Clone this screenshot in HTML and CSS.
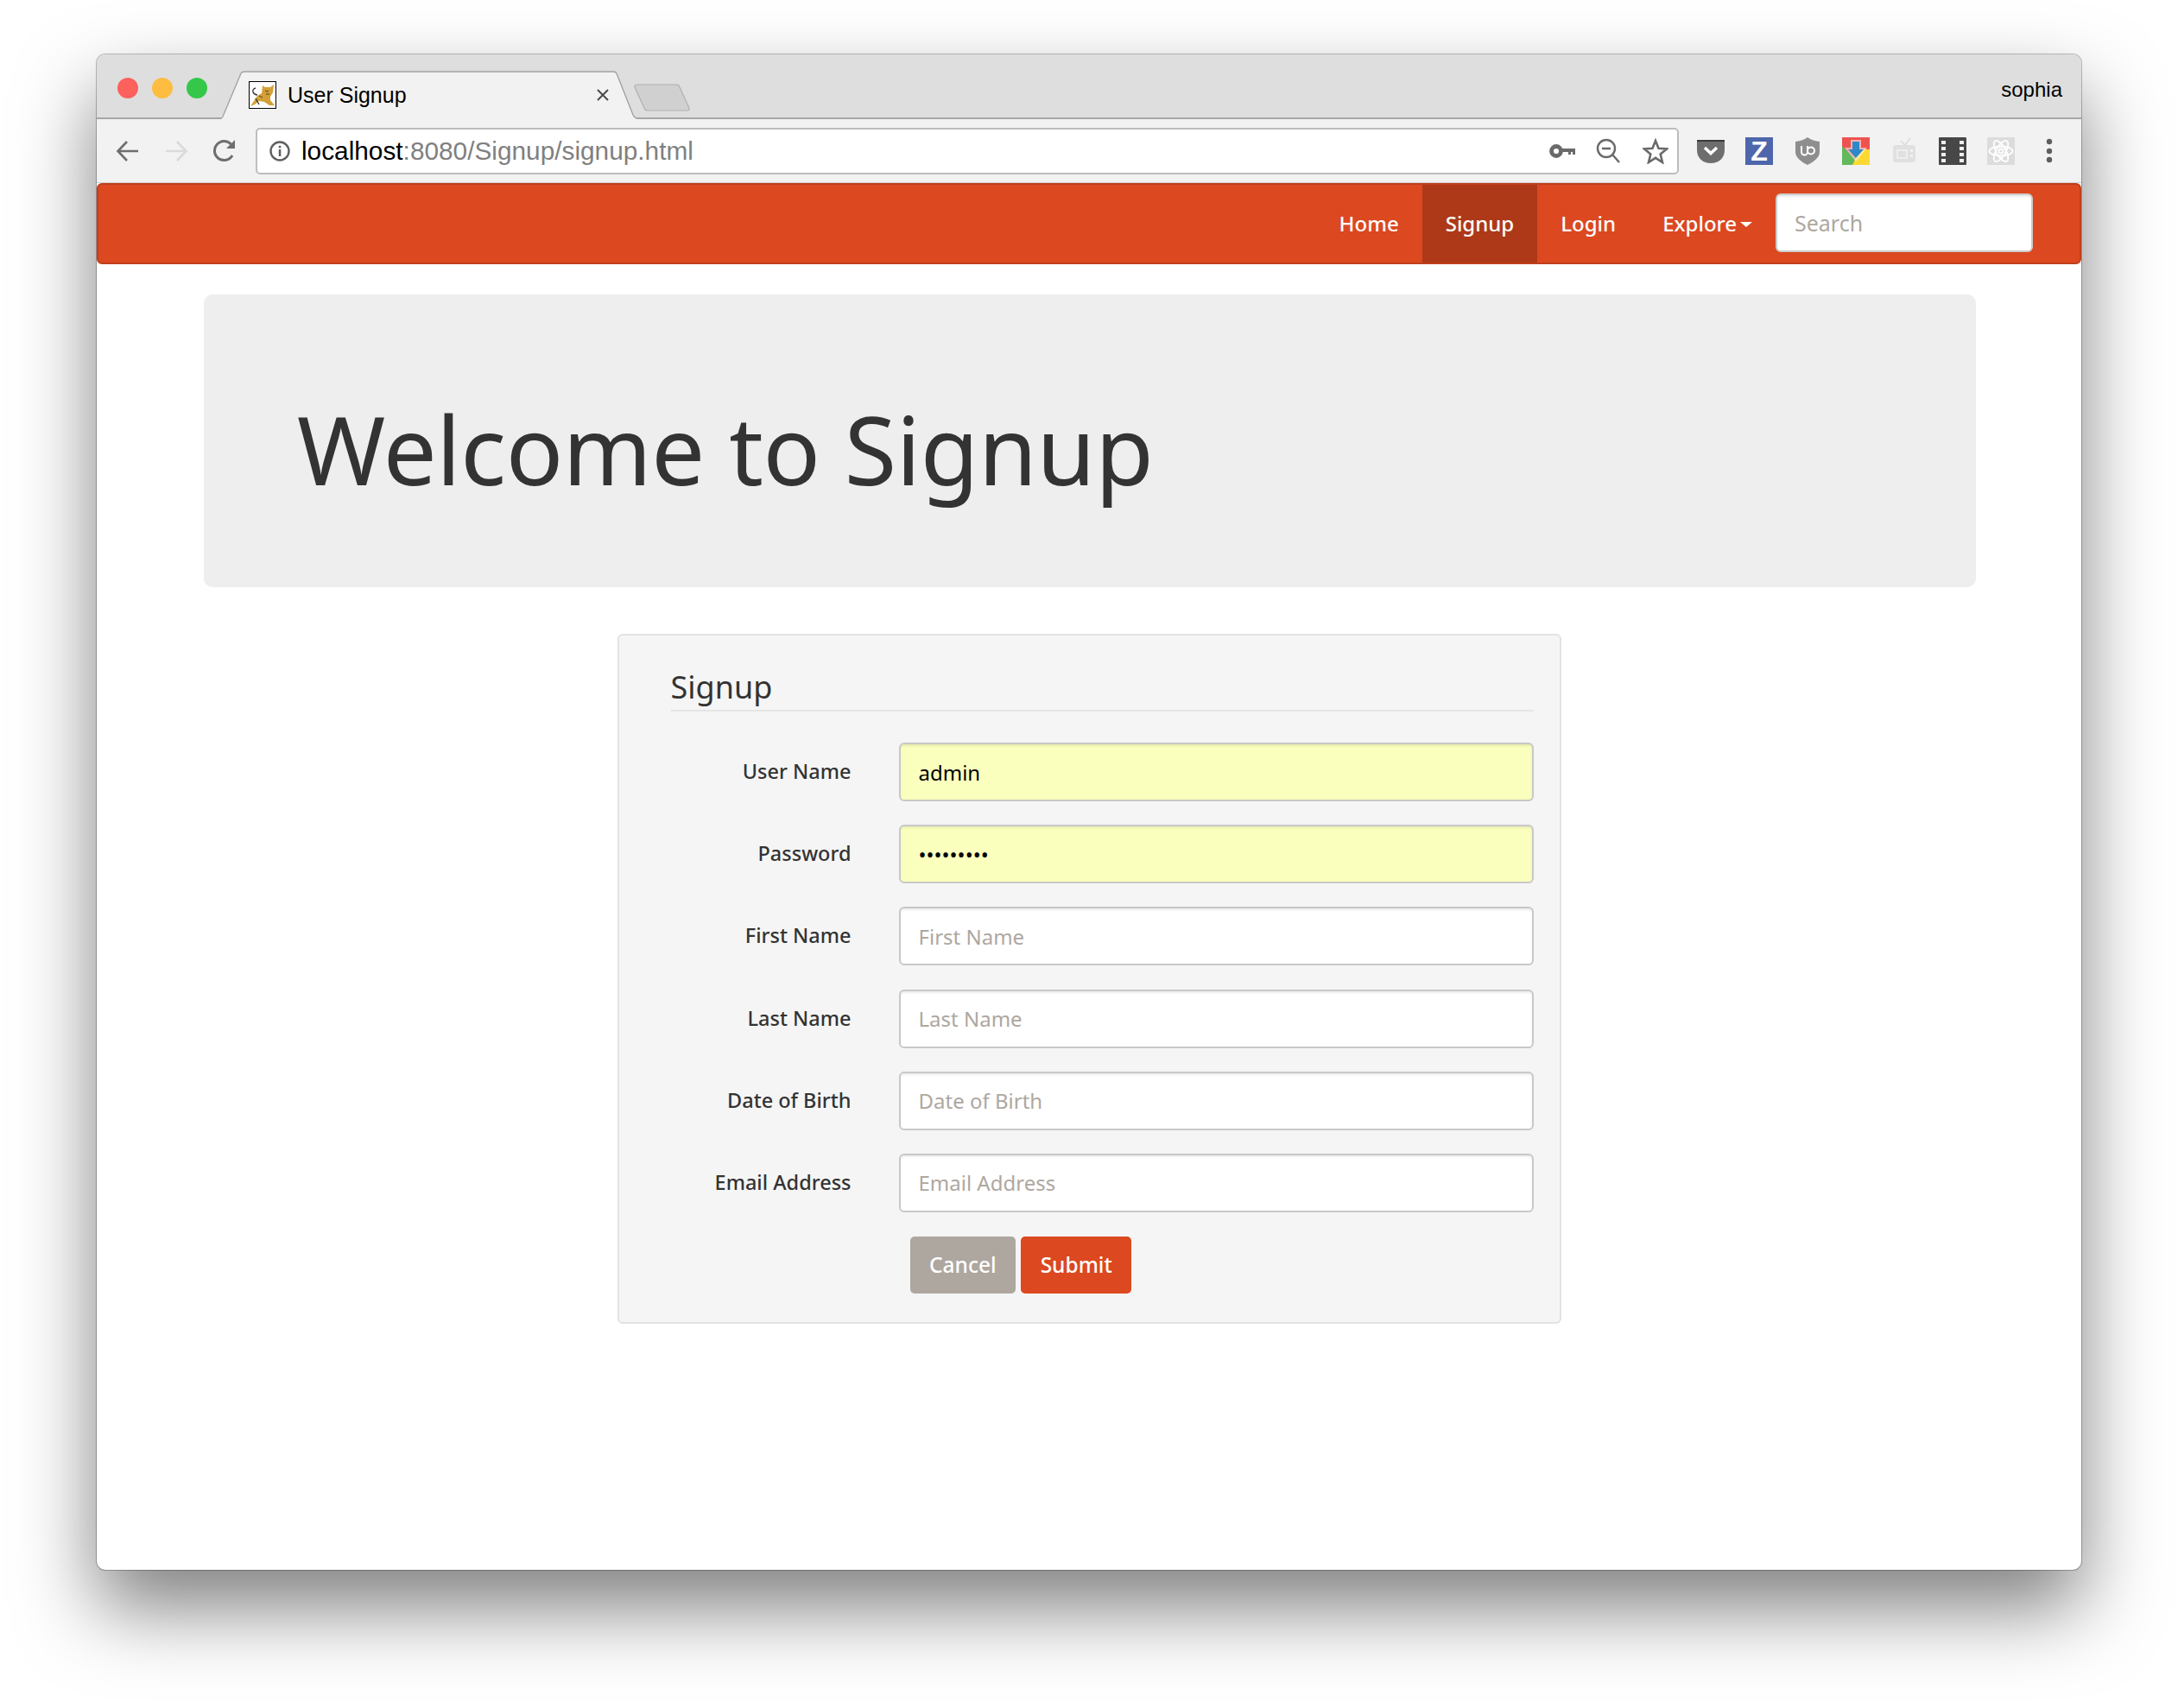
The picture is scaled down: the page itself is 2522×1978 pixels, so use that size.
FILE: index.html
```html
<!DOCTYPE html>
<html lang="en">
<head>
  <meta charset="UTF-8" />
  <title>User Signup</title>
  <link rel="stylesheet" href="styles.css">
</head>
<body>
  <div class="window">
    <div class="titlebar">
      <div class="lights">
        <span class="light red"></span>
        <span class="light yellow"></span>
        <span class="light green"></span>
      </div>
      <div class="tab">
        <svg class="tab-shape" width="483" height="56" viewBox="0 0 483 56">
          <path d="M0 56 L23 3 Q24 1 27 1 L454 1 Q457 1 458 3 L477 52 Q479 56 483 56 Z" fill="#f2f2f2"/>
          <path d="M0 55 Q1 55 2 53 L23 3 Q24 1 27 1 L454 1 Q457 1 458 3 L477 51 Q479 55 483 55" fill="none" stroke="#a3a3a3" stroke-width="1.4"/>
        </svg>
        <svg class="favicon" width="32" height="32" viewBox="0 0 32 32">
          <rect x="0.5" y="0.5" width="31" height="31" fill="#fff" stroke="#000"/>
          <path d="M16 5 L19 7 L25 7 L29 4 L28 13 L25 18 L25 22 L30 28 L24 28 L18 24 L12 23 L7 27 L2 29 L6 23 L10 17 L15 14 Z" fill="#d3a038"/>
          <path d="M10 16 C4 15 3 9 8 8 M8 20 L12 27" fill="none" stroke="#333" stroke-width="1.300"/>
          <path d="M19 11 L21 12 L23 11 M20 15 L24 15 M12 17 L16 19" fill="none" stroke="#5a3c10" stroke-width="1"/>
        </svg>
        <span class="tab-title">User Signup</span>
        <svg class="tab-close" width="16" height="14" viewBox="0 0 16 14">
          <path d="M2 1 L14 13 M14 1 L2 13" stroke="#4a4a4a" stroke-width="2"/>
        </svg>
      </div>
      <svg class="newtab" width="66" height="32" viewBox="0 0 66 32">
        <path d="M1 4 Q1 1 4 1 L50 1 Q52 1 53 4 L64 28 Q65 31 62 31 L16 31 Q13 31 12 28 Z" fill="#d0d0d0" stroke="#b0b0b0" stroke-width="1.2"/>
      </svg>
      <span class="profile">sophia</span>
    </div>

    <div class="toolbar">
      <div class="nav-buttons">
        <svg width="30" height="30" viewBox="0 0 30 30"><path d="M27 15 H4 M14 4 L3.500 15 L14 26" fill="none" stroke="#6e6e6e" stroke-width="2.600"/></svg>
        <svg width="30" height="30" viewBox="0 0 30 30"><path d="M3 15 H26 M16 4 L26.500 15 L16 26" fill="none" stroke="#dadada" stroke-width="2.600"/></svg>
        <svg width="30" height="30" viewBox="0 0 30 30"><path d="M24 20 A11 11 0 1 1 22.500 7" fill="none" stroke="#6e6e6e" stroke-width="3"/><path d="M27 2 V12 H17 Z" fill="#6e6e6e"/></svg>
      </div>
      <div class="omnibox">
        <svg width="24" height="24" viewBox="0 0 24 24"><circle cx="12" cy="12" r="10.500" fill="none" stroke="#5f5f5f" stroke-width="2.400"/><rect x="10.800" y="10" width="2.500" height="8" fill="#5f5f5f"/><rect x="10.800" y="5.800" width="2.500" height="2.600" fill="#5f5f5f"/></svg>
        <span class="url"><span class="url-host">localhost</span>:8080/Signup/signup.html</span>
        <svg class="omni-icon" width="30" height="16" viewBox="0 0 30 16"><circle cx="8" cy="8" r="5.500" fill="none" stroke="#6a6a6a" stroke-width="4.800"/><path d="M13 5 H30 V12 H27 V9 H25 V12 H22 V9 H13 Z" fill="#6a6a6a"/></svg>
        <svg class="omni-icon" width="30" height="30" viewBox="0 0 30 30"><circle cx="12" cy="12" r="10" fill="none" stroke="#6a6a6a" stroke-width="2.400"/><path d="M7 12 H17 M19 19 L27 28" fill="none" stroke="#6a6a6a" stroke-width="2.400"/></svg>
        <svg class="omni-icon" width="30" height="30" viewBox="0 0 30 30"><path d="M15 3 L18.500 11.800 L28 12.500 L20.700 18.500 L23 28 L15 22.800 L7 28 L9.300 18.500 L2 12.500 L11.500 11.800 Z" fill="none" stroke="#6a6a6a" stroke-width="2.600"/></svg>
      </div>
      <div class="extensions">
        <svg width="32" height="32" viewBox="0 0 32 32"><path d="M0 3 H32 V15 C32 24 25 30 16 30 C7 30 0 24 0 15 Z" fill="#6e6e6e"/><path d="M0 3 H32 V5 H0 Z" fill="#3a3a3a"/><path d="M9 12 L16 18.500 L23 12" fill="none" stroke="#fff" stroke-width="3.500"/></svg>
        <svg width="32" height="32" viewBox="0 0 32 32"><rect width="32" height="32" fill="#4e66ab"/><text x="16" y="27" class="ext-z">Z</text></svg>
        <svg width="32" height="32" viewBox="0 0 32 32"><path d="M16 0 Q21 4 30 5 V17 C30 24 22 29 16 32 C10 29 2 24 2 17 V5 Q11 4 16 0 Z" fill="#8e8e8e"/><path d="M9 10 V17 A3.500 3.500 0 0 0 16 17 V10" fill="none" stroke="#fff" stroke-width="2"/><circle cx="20" cy="15.500" r="4" fill="none" stroke="#fff" stroke-width="2"/></svg>
        <svg width="32" height="32" viewBox="0 0 32 32"><rect width="32" height="32" fill="#ee5350"/><path d="M0 10 L16 26 L12 32 H0 Z" fill="#62b95d"/><path d="M32 14 H20 L16 24 L12 32 H32 Z" fill="#fcd932"/><path d="M10 3 H22 V12 H29 L16 28 L3 12 H10 Z" fill="#fff" opacity=".55"/><path d="M12 5 H20 V14 H25 L16 24 L7 14 H12 Z" fill="#2f88c8"/></svg>
        <svg width="32" height="32" viewBox="0 0 32 32"><path d="M12 4 L17 9 L23 1" fill="none" stroke="#dcdcdc" stroke-width="1.500"/><rect x="3" y="9" width="26" height="20" rx="3" fill="#e0e0e0"/><path d="M8 15 H19 V24 H8 Z" fill="none" stroke="#f2f2f2" stroke-width="1.500"/><rect x="23" y="14" width="3" height="3" fill="#f2f2f2"/><rect x="23" y="20" width="3" height="3" fill="#f2f2f2"/></svg>
        <svg width="32" height="32" viewBox="0 0 32 32"><rect width="32" height="32" rx="1" fill="#474747"/><g fill="#eee"><rect x="3" y="4" width="5" height="4"/><rect x="3" y="11" width="5" height="4"/><rect x="3" y="18" width="5" height="4"/><rect x="3" y="25" width="5" height="4"/><rect x="24" y="4" width="5" height="4"/><rect x="24" y="11" width="5" height="4"/><rect x="24" y="18" width="5" height="4"/><rect x="24" y="25" width="5" height="4"/></g></svg>
        <svg width="32" height="32" viewBox="0 0 32 32"><rect width="32" height="32" rx="1" fill="#dcdcdc"/><g fill="none" stroke="#fff" stroke-width="1.800"><ellipse cx="16" cy="16" rx="13.500" ry="5.500"/><ellipse cx="16" cy="16" rx="13.500" ry="5.500" transform="rotate(60 16 16)"/><ellipse cx="16" cy="16" rx="13.500" ry="5.500" transform="rotate(120 16 16)"/><circle cx="16" cy="16" r="2.500"/></g></svg>
        <svg width="32" height="32" viewBox="0 0 32 32"><g fill="#5e5e5e"><circle cx="16" cy="5" r="3.200"/><circle cx="16" cy="16" r="3.200"/><circle cx="16" cy="26" r="3.200"/></g></svg>
      </div>
    </div>

    <nav class="navbar">
      <a class="nav-link" href="#">Home</a>
      <a class="nav-link active" href="#">Signup</a>
      <a class="nav-link" href="#">Login</a>
      <a class="nav-link" href="#">Explore<span class="caret"></span></a>
      <input class="nav-search" type="text" placeholder="Search">
    </nav>

    <main class="content">
      <div class="jumbotron">
        <h1>Welcome to Signup</h1>
      </div>

      <form class="well">
        <div class="legend">Signup</div>
        <div class="form-rows">
          <label class="field-label">User Name</label>
          <input class="field autofilled" type="text" value="admin">
          <label class="field-label">Password</label>
          <input class="field autofilled" type="password" value="password1">
          <label class="field-label">First Name</label>
          <input class="field" type="text" placeholder="First Name">
          <label class="field-label">Last Name</label>
          <input class="field" type="text" placeholder="Last Name">
          <label class="field-label">Date of Birth</label>
          <input class="field" type="text" placeholder="Date of Birth">
          <label class="field-label">Email Address</label>
          <input class="field" type="text" placeholder="Email Address">
        </div>
        <div class="actions">
          <button class="btn btn-cancel" type="button">Cancel</button>
          <button class="btn btn-submit" type="submit">Submit</button>
        </div>
      </form>
    </main>
  </div>
</body>
</html>
```

FILE: styles.css
```css
* {
  box-sizing: border-box;
}

body {
  margin: 0;
  padding: 63px 112px 0;
  height: 1978px;
  overflow: hidden;
  background-color: white;
  font-family: "Noto Sans", sans-serif;
}

.window {
  display: flex;
  flex-direction: column;
  height: 1755px;
  background-color: white;
  border-radius: 10px;
  box-shadow: 0 0 0 1px rgba(0, 0, 0, 0.25), 0 44px 90px rgba(0, 0, 0, 0.5);
}

/* browser chrome */
.titlebar {
  display: flex;
  align-items: flex-start;
  height: 75px;
  padding-top: 19px;
  background-color: #dedede;
  border-bottom: 2px solid #a6a6a6;
  border-radius: 10px 10px 0 0;
  font-family: "Liberation Sans", sans-serif;
}

.lights {
  display: flex;
  gap: 16px;
  width: 144px;
  padding: 8px 0 0 24px;
}

.light {
  width: 24px;
  height: 24px;
  border-radius: 50%;
}

.red { background-color: #fc615d; }
.yellow { background-color: #fdbd41; }
.green { background-color: #34c749; }

.tab {
  position: relative;
  display: flex;
  align-items: center;
  width: 483px;
  height: 56px;
  padding: 0 33px 0 32px;
}

.tab-shape {
  position: absolute;
  top: 0;
  left: 0;
}

.favicon, .tab-title, .tab-close {
  position: relative;
}

.tab-title {
  flex: 1;
  margin-left: 13px;
  font-size: 25px;
  color: black;
}

.newtab {
  margin: 15px 0 0 -5px;
}

.profile {
  margin: 8px 22px 0 auto;
  font-size: 24px;
  color: black;
}

.toolbar {
  display: flex;
  align-items: center;
  height: 74px;
  padding: 0 0 0 21px;
  background-color: #f2f2f2;
  border-bottom: 1px solid #d0d0d0;
}

.nav-buttons {
  display: flex;
  gap: 26px;
}

.omnibox {
  display: flex;
  align-items: center;
  width: 1648px;
  height: 54px;
  margin-left: 21px;
  padding: 0 10px 0 14px;
  background-color: white;
  border: 2px solid #bdbdbd;
  border-radius: 5px;
  font-family: "Liberation Sans", sans-serif;
}

.url {
  flex: 1;
  margin-left: 13px;
  font-size: 29.8px;
  color: #808080;
}

.url-host {
  color: black;
}

.omni-icon {
  margin-left: 24px;
}

.extensions {
  display: flex;
  gap: 24px;
  margin-left: 21px;
}

.ext-z {
  font-family: "Liberation Sans", sans-serif;
  font-size: 32px;
  font-weight: bold;
  fill: white;
  text-anchor: middle;
}

/* page navbar */
.navbar {
  display: flex;
  align-items: center;
  justify-content: flex-end;
  height: 94px;
  padding-right: 54px;
  background-color: #dc4820;
  border: 2px solid #bf3f1c;
  border-radius: 6px;
}

.nav-link {
  align-self: stretch;
  display: flex;
  align-items: center;
  padding: 0 27px 2px;
  font-size: 24px;
  font-weight: 500;
  color: white;
  text-decoration: none;
}

.nav-link.active {
  background-color: #ad3918;
}

.caret {
  margin: 4px 0 0 4px;
  border-top: 6px solid white;
  border-left: 7px solid transparent;
  border-right: 7px solid transparent;
}

.nav-search {
  width: 298px;
  height: 68px;
  margin-top: -2px;
  padding: 0 20px;
  background-color: white;
  border: 2px solid #cccccc;
  border-radius: 6px;
  box-shadow: inset 0 2px 2px rgba(0, 0, 0, 0.075);
  font-family: "Noto Sans", sans-serif;
  font-size: 25px;
}

.nav-search::placeholder, .field::placeholder {
  color: #aea79f;
  opacity: 1;
}

/* page content */
.content {
  display: flex;
  flex-direction: column;
  align-items: center;
  padding: 35px 122px 0;
}

.jumbotron {
  align-self: stretch;
  height: 339px;
  margin-left: 2px;
  padding: 118px 108px 0;
  background-color: #eeeeee;
  border-radius: 10px;
}

.jumbotron h1 {
  margin: 0;
  font-size: 110px;
  font-weight: 400;
  letter-spacing: -0.4px;
  line-height: 1.1;
  color: #333333;
}

.well {
  width: 1093px;
  height: 799px;
  margin-top: 54px;
  padding: 34px 30px 0 60px;
  background-color: #f5f5f5;
  border: 2px solid #e3e3e3;
  border-radius: 6px;
}

.legend {
  height: 54px;
  font-size: 36px;
  line-height: 52px;
  color: #333333;
  border-bottom: 2px solid #e5e5e5;
}

.form-rows {
  display: grid;
  grid-template-columns: 209px 1fr;
  grid-auto-rows: 68px;
  column-gap: 55px;
  row-gap: 27.2px;
  align-items: center;
  margin-top: 36px;
}

.field-label {
  margin-bottom: 2px;
  text-align: right;
  font-size: 23.5px;
  font-weight: 500;
  color: #333333;
}

.field {
  width: 100%;
  height: 68px;
  padding: 0 21px;
  background-color: white;
  border: 2px solid #c8c8c8;
  border-radius: 6px;
  box-shadow: inset 0 2px 2px rgba(0, 0, 0, 0.075);
  font-family: "Noto Sans", sans-serif;
  font-size: 24px;
  color: black;
}

.field.autofilled {
  background-color: #faffbd;
}

.actions {
  display: flex;
  gap: 6px;
  margin: 28px 0 0 277px;
}

.btn {
  height: 66px;
  padding: 0 22.5px;
  border: none;
  border-radius: 5px;
  font-family: "Noto Sans", sans-serif;
  font-size: 24.5px;
  font-weight: 500;
  color: white;
}

.btn-cancel {
  background-color: #aea79f;
}

.btn-submit {
  background-color: #dc4820;
}
```
